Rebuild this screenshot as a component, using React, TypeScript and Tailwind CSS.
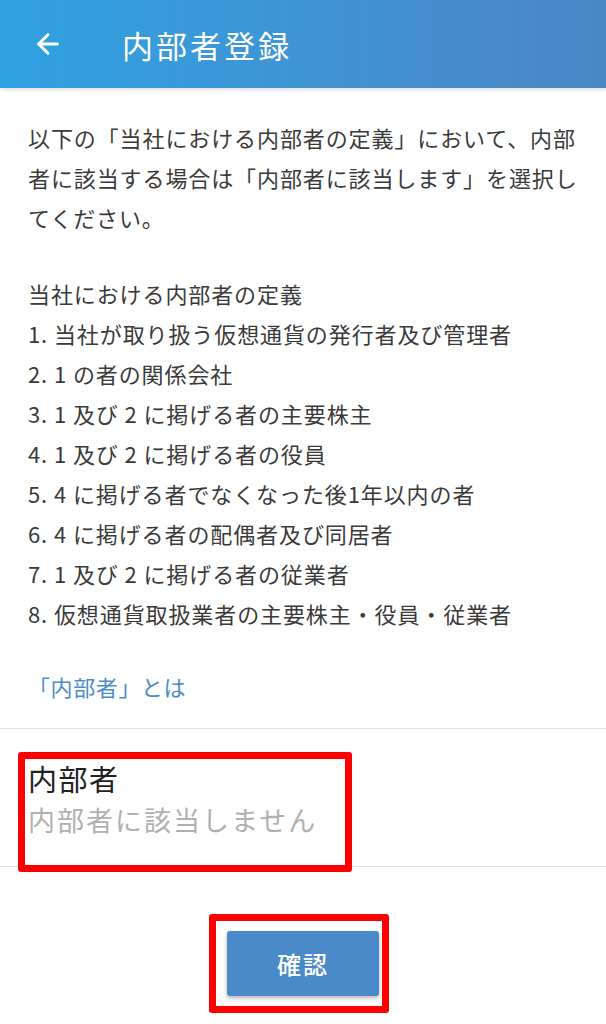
import { ArrowLeft } from "lucide-react"

const jp = { fontFamily: '"Noto Sans CJK JP", "Noto Sans", sans-serif' }

const definitions = [
  "1. 当社が取り扱う仮想通貨の発行者及び管理者",
  "2. 1 の者の関係会社",
  "3. 1 及び 2 に掲げる者の主要株主",
  "4. 1 及び 2 に掲げる者の役員",
  "5. 4 に掲げる者でなくなった後1年以内の者",
  "6. 4 に掲げる者の配偶者及び同居者",
  "7. 1 及び 2 に掲げる者の従業者",
  "8. 仮想通貨取扱業者の主要株主・役員・従業者",
]

export default function App() {
  return (
    <div className="min-h-[1024px] w-[606px] bg-white overflow-hidden" style={jp}>
      {/* Header */}
      <div className="h-[88px] flex items-center bg-gradient-to-r from-[#2ea2e2] to-[#4a86c6] shadow-[0_2px_3px_rgba(0,0,0,0.12)]">
        <ArrowLeft className="ml-[32px] h-[32px] w-[32px] text-white" strokeWidth={2.2} />
        <h1 className="ml-[58px] text-[31px] tracking-[3px] text-white leading-none">内部者登録</h1>
      </div>

      {/* Description */}
      <div className="px-[28px] pt-[29px] text-[22px] leading-[40px] tracking-[0.9px] text-[#3a3a3a] whitespace-nowrap">
        <p>
          以下の「当社における内部者の定義」において、内部
          <br />
          者に該当する場合は「内部者に該当します」を選択し
          <br />
          てください。
        </p>
        <div className="mt-[36px]">
          <p>当社における内部者の定義</p>
          {definitions.map((d) => (
            <p key={d}>{d}</p>
          ))}
        </div>
        <p className="mt-[33px] text-[#4a8cc8] text-[22px] tracking-[0.6px]">「内部者」とは</p>
      </div>

      {/* Selection */}
      <div className="mt-[22px] border-t border-b border-[#e2e2e2] h-[139px] relative">
        <div className="pl-[28px] pt-[32px]">
          <p className="text-[29px] leading-[34px] tracking-[1.5px] text-[#222]">内部者</p>
          <p className="mt-[8px] text-[27px] leading-[34px] tracking-[2px] text-[#b0b0b0]">内部者に該当しません</p>
        </div>
        <div className="absolute left-[18px] top-[23px] w-[334px] h-[120px] border-[7px] border-[#ff0000] rounded-[3px]" />
      </div>

      {/* Confirm */}
      <div className="flex justify-center pt-[64px] relative">
        <button className="w-[152px] h-[65px] rounded-[3px] bg-[#4a8ac8] text-white text-[24px] font-medium tracking-[2px] shadow-[0_2px_4px_rgba(0,0,0,0.3)]">
          確認
        </button>
        <div className="absolute left-[209px] top-[47px] w-[180px] h-[99px] border-[7px] border-[#ff0000] rounded-[3px]" />
      </div>
    </div>
  )
}
